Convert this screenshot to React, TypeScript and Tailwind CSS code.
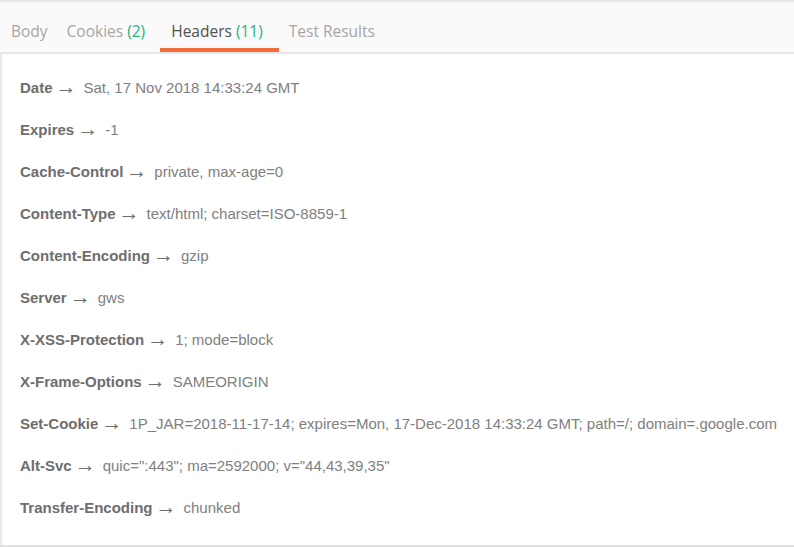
const headers: [string, string][] = [
  ["Date", "Sat, 17 Nov 2018 14:33:24 GMT"],
  ["Expires", "-1"],
  ["Cache-Control", "private, max-age=0"],
  ["Content-Type", "text/html; charset=ISO-8859-1"],
  ["Content-Encoding", "gzip"],
  ["Server", "gws"],
  ["X-XSS-Protection", "1; mode=block"],
  ["X-Frame-Options", "SAMEORIGIN"],
  ["Set-Cookie", "1P_JAR=2018-11-17-14; expires=Mon, 17-Dec-2018 14:33:24 GMT; path=/; domain=.google.com"],
  ["Alt-Svc", 'quic=":443"; ma=2592000; v="44,43,39,35"'],
  ["Transfer-Encoding", "chunked"],
];

export default function App() {
  return (
    <div className="w-[794px] h-[547px] bg-white flex flex-col border-t-2 border-[#e6e6e6] overflow-hidden">
      <div className="flex flex-1 min-h-0">
        <div className="w-[3px] bg-gradient-to-r from-[#e2e2e2] to-white" />
        <div className="flex-1 flex flex-col">
          <div className="h-[52px] -ml-[3px] bg-[#fafafa] border-b-2 border-[#e6e6e6] flex items-stretch pl-[11px] font-['Open_Sans',sans-serif] text-[15.5px] text-[#a6a6a6]">
            <div className="flex items-center pt-[10px]">Body</div>
            <div className="flex items-center pt-[10px] ml-[19px]">
              Cookies&nbsp;<span className="text-[#26b47f]">(2)</span>
            </div>
            <div className="relative flex items-center pt-[10px] ml-[15px] pl-[11px] pr-[16px] text-[#505050]">
              Headers&nbsp;<span className="text-[#26b47f]">(11)</span>
              <div className="absolute left-0 right-0 bottom-0 h-1 bg-[#f26b3a]" />
            </div>
            <div className="flex items-center pt-[10px] ml-[10px]">Test Results</div>
          </div>
          <div className="pt-[13px] pl-[17px] font-['Liberation_Sans',Arial,sans-serif] text-[15px]">
            {headers.map(([k, v]) => (
              <div key={k} className="h-[42px] flex items-center whitespace-nowrap">
                <span className="font-bold text-[#6e6e6e]">{k}</span>
                <span className="text-[#6e6e6e] ml-[3px] text-[21px] leading-none -translate-y-[2px]">→</span>
                <span className="text-[#808080] ml-[7px]">{v}</span>
              </div>
            ))}
          </div>
        </div>
      </div>
      <div className="h-[2px] bg-[#e0e0e0]" />
    </div>
  );
}
